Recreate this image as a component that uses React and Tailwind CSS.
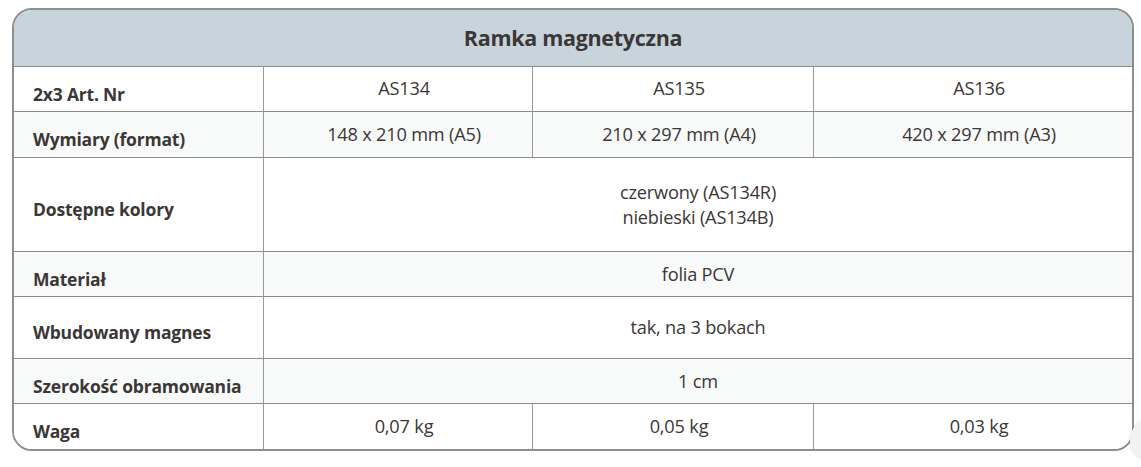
import React from 'react';

const rows = [
  { label: '2x3 Art. Nr', cells: ['AS134', 'AS135', 'AS136'], h: 'h-[45px]', bg: 'bg-white' },
  { label: 'Wymiary (format)', cells: ['148 x 210 mm (A5)', '210 x 297 mm (A4)', '420 x 297 mm (A3)'], h: 'h-[46px]', bg: 'bg-[#f8f9f9]' },
  { label: 'Dostępne kolory', span: ['czerwony (AS134R)', 'niebieski (AS134B)'], h: 'h-[94px]', bg: 'bg-white' },
  { label: 'Materiał', span: ['folia PCV'], h: 'h-[45px]', bg: 'bg-[#f8f9f9]' },
  { label: 'Wbudowany magnes', span: ['tak, na 3 bokach'], h: 'h-[62px]', bg: 'bg-white' },
  { label: 'Szerokość obramowania', span: ['1 cm'], h: 'h-[45px]', bg: 'bg-[#f8f9f9]' },
  { label: 'Waga', cells: ['0,07 kg', '0,05 kg', '0,03 kg'], h: 'h-[46px]', bg: 'bg-white' },
];

function App() {
  return (
    <main className="relative w-[1141px] h-[467px] overflow-hidden bg-white text-[#3b3737] font-['Open_Sans',sans-serif]">
      <div className="ml-[12px] mt-[8px] w-[1122px] rounded-[20px] border-2 border-[#8e8e8e] overflow-hidden">
        <header className="h-[56px] bg-[#c8d4dc] flex items-center justify-center">
          <h1 className="text-[21.5px] font-bold tracking-[-0.3px]">Ramka magnetyczna</h1>
        </header>

        {rows.map((row) => (
          <div
            key={row.label}
            className={`grid grid-cols-[249px_269px_281px_1fr] border-t border-[#8c8c8c] ${row.h} ${row.bg}`}
          >
            <div className="flex items-center pl-[19px] pt-[10px] text-[17.5px] font-bold tracking-[-0.2px]">
              {row.label}
            </div>
            {row.cells ? (
              row.cells.map((c) => (
                <div key={c} className="flex items-center justify-center pl-[12px] border-l border-[#9a9a9a] text-[18.2px] tracking-[-0.2px]">
                  {c}
                </div>
              ))
            ) : (
              <div className="col-span-3 flex flex-col items-center justify-center border-l border-[#9a9a9a] text-[18.2px] leading-[25px] tracking-[-0.2px]">
                {row.span.map((s) => (
                  <span key={s}>{s}</span>
                ))}
              </div>
            )}
          </div>
        ))}
      </div>

      <div className="absolute left-[1130px] top-[418px] w-[44px] h-[44px] rounded-full bg-[#f2f2f2] shadow-[0_0_3px_rgba(0,0,0,0.15)]" />
    </main>
  );
}

export default App;
